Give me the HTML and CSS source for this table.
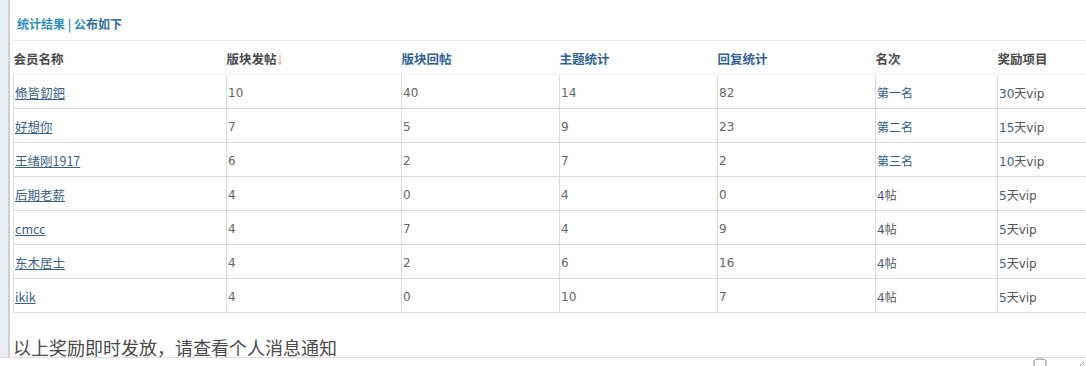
FILE: index.html
```html
<!DOCTYPE html>
<html lang="zh-CN">
<head>
<meta charset="utf-8">
<title>统计结果</title>
<link rel="stylesheet" href="styles.css">
</head>
<body>
<div class="frame">
  <div class="side"></div>
  <div class="content">
    <h2 class="title"><span class="t1">统计结果 | 公</span><span class="t2">布如下</span></h2>
    <table class="stats">
      <colgroup>
        <col class="c1"><col class="c2"><col class="c3"><col class="c4"><col class="c5"><col class="c6"><col class="c7">
      </colgroup>
      <thead>
        <tr>
          <th>会员名称</th>
          <th>版块发帖<svg class="arrow" width="4" height="10" viewBox="0 0 4 10"><path d="M2 0V9M0.5 7L2 9.5L3.5 7" fill="none" stroke="#efa38f" stroke-width="1"/></svg></th>
          <th class="blue">版块回帖</th>
          <th class="blue">主题统计</th>
          <th class="blue">回复统计</th>
          <th>名次</th>
          <th>奖励项目</th>
        </tr>
      </thead>
      <tbody>
        <tr><td><a href="#">翛皆釖鈀</a></td><td>10</td><td>40</td><td>14</td><td>82</td><td class="rank">第一名</td><td class="prize"><span class="n">30</span>天vip</td></tr>
        <tr><td><a href="#">好想你</a></td><td>7</td><td>5</td><td>9</td><td>23</td><td class="rank">第二名</td><td class="prize"><span class="n">15</span>天vip</td></tr>
        <tr><td><a href="#">王绪刚1917</a></td><td>6</td><td>2</td><td>7</td><td>2</td><td class="rank">第三名</td><td class="prize"><span class="n">10</span>天vip</td></tr>
        <tr><td><a href="#">后期老薪</a></td><td>4</td><td>0</td><td>4</td><td>0</td><td class="rank2"><span class="n">4</span>帖</td><td class="prize"><span class="n">5</span>天vip</td></tr>
        <tr><td><a href="#">cmcc</a></td><td>4</td><td>7</td><td>4</td><td>9</td><td class="rank2"><span class="n">4</span>帖</td><td class="prize"><span class="n">5</span>天vip</td></tr>
        <tr><td><a href="#">东木居士</a></td><td>4</td><td>2</td><td>6</td><td>16</td><td class="rank2"><span class="n">4</span>帖</td><td class="prize"><span class="n">5</span>天vip</td></tr>
        <tr><td><a href="#">ikik</a></td><td>4</td><td>0</td><td>10</td><td>7</td><td class="rank2"><span class="n">4</span>帖</td><td class="prize"><span class="n">5</span>天vip</td></tr>
      </tbody>
    </table>
    <p class="note">以上奖励即时发放，请查看个人消息通知</p>
  </div>
</div>
<div class="bottombar">
  <svg class="icons" width="60" height="8" viewBox="0 0 60 8"><path d="M8 8V4Q8 1 14 1Q20 1 20 4V8" fill="none" stroke="#888" stroke-width="1"/><path d="M54 8L58 4" fill="none" stroke="#999" stroke-width="1"/></svg>
</div>
</body>
</html>
```
FILE: styles.css
```css
html, body {
  margin: 0;
  padding: 0;
  background: #fff;
  overflow: hidden;
}
body {
  width: 1086px;
  height: 366px;
  font-family: "DejaVu Sans", "Noto Sans CJK SC", sans-serif;
  font-size: 12px;
  color: #666;
}
.frame {
  display: flex;
  height: 357px;
}
.side {
  flex: 0 0 8px;
  background: #e9eef2;
  border-right: 2px solid #c9d1d8;
}
.content {
  flex: 1;
  min-width: 0;
  padding-left: 3px;
}
.title {
  margin: 0 0 0 -1px;
  height: 41px;
  box-sizing: border-box;
  padding: 16px 0 0 5px;
  font-family: "Noto Sans CJK SC", sans-serif;
  font-size: 12px;
  line-height: 16px;
  font-weight: bold;
  border-bottom: 1px solid #e8ecee;
}
.t1 { color: #2f8fbf; }
.t2 { color: #2a6da0; }
.stats {
  border-collapse: collapse;
  table-layout: fixed;
  width: 1110px;
}
.c1 { width: 213px; }
.c2 { width: 175px; }
.c3 { width: 158px; }
.c4 { width: 158px; }
.c5 { width: 158px; }
.c6 { width: 122px; }
.c7 { width: 126px; }
.stats th {
  height: 32px;
  padding: 1px 0 0;
  text-align: left;
  font-family: "Noto Sans CJK SC", sans-serif;
  font-size: 12.5px;
  font-weight: bold;
  color: #4a4a4a;
  border-bottom: 1px solid #eef0f0;
  white-space: nowrap;
}
.stats th.blue { color: #2f5f93; }
.arrow {
  vertical-align: -1px;
  margin-left: 1px;
}
.stats td {
  height: 31px;
  padding: 2px 0 0 1px;
  border-bottom: 1px solid #dcdcdc;
  border-left: 1px solid #dcdcdc;
  color: #666;
  white-space: nowrap;
  font-size: 12px;
}
.stats a {
  color: #3b6186;
  text-decoration: underline;
  font-family: "Noto Sans CJK SC", sans-serif;
  font-size: 12.5px;
}
.stats td.rank { color: #2e5d8c; font-family: "Noto Sans CJK SC", sans-serif; }
.stats td.rank2 { color: #555; }
.stats td.prize { color: #555; }
.n { color: #3d5f85; }
.note {
  margin: 24px 0 0;
  font-family: "Noto Sans CJK SC", sans-serif;
  font-size: 18px;
  line-height: 20px;
  color: #4a4a4a;
}
.bottombar {
  border-top: 1px solid #dedede;
  height: 8px;
  display: flex;
  justify-content: flex-end;
  align-items: flex-end;
}
.icons {
  display: block;
}
```
